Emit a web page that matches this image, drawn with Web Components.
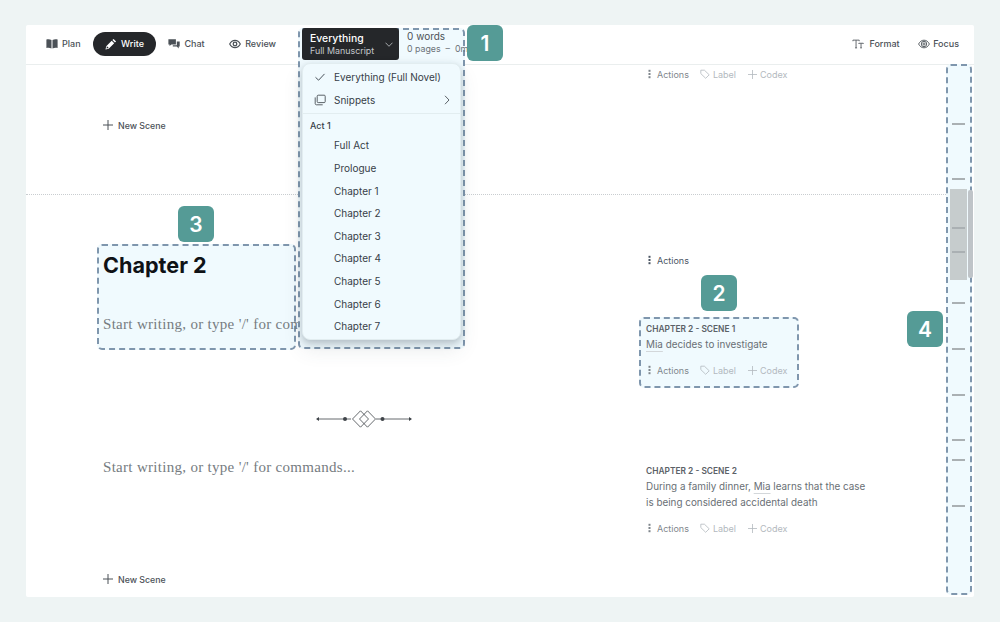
<!DOCTYPE html>
<html lang="en">
<head>
<meta charset="utf-8">
<title>Manuscript</title>
<style>
  html,body{margin:0;height:100%}
  body{background:#eef4f4;font-family:Inter,"Liberation Sans",sans-serif;-webkit-font-smoothing:antialiased}
</style>
</head>
<body>
<app-shell>
  <top-bar slot="top">
    <tab-item><svg viewBox="0 0 12 12" width="12" height="12"><path fill="#4b5157" d="M0.400 1.600c1.700-.4 3.600-.3 5.100.4v8.400c-1.600-.7-3.400-.8-5.100-.4zM11.600 1.600c-1.700-.4-3.600-.3-5.100.4v8.400c1.600-.7 3.400-.8 5.100-.4z"/></svg>Plan</tab-item>
    <tab-item active><svg viewBox="0 0 12 12" width="12" height="12"><path fill="#fff" d="M8.600.9l2.500 2.500-1.200 1.200-2.500-2.500zM6.700 2.800l2.500 2.500-5.500 5.500-3.200.7.700-3.200zM1.900 8.200l-.4 2.300 2.300-.4z"/></svg>Write</tab-item>
    <tab-item><svg viewBox="0 0 12 12" width="12" height="12"><path fill="#4b5157" d="M.4 1.200h7.500v5.200H3.400L1.500 8V6.400H.4z"/><path fill="#4b5157" d="M8.800 3.600h2.900v5h-1v1.900L8.800 8.600H4.800V7.300h4z"/></svg>Chat</tab-item>
    <tab-item><svg viewBox="0 0 12 12" width="12" height="12" fill="none" stroke="#4b5157"><path stroke-width="1.200" d="M.7 6C2 3.600 3.800 2.400 6 2.400S10 3.600 11.300 6C10 8.400 8.200 9.600 6 9.600S2 8.400.7 6z"/><circle cx="6" cy="6" r="1.800" stroke-width="1.300"/></svg>Review</tab-item>
    <scope-picker>
      <scope-button slot="button"></scope-button>
      <word-count slot="count"></word-count>
      <scope-menu slot="menu">
        <menu-row icon="check">Everything (Full Novel)</menu-row>
        <menu-row icon="copy" more>Snippets</menu-row>
        <menu-head>Act 1</menu-head>
        <menu-row>Full Act</menu-row>
        <menu-row>Prologue</menu-row>
        <menu-row>Chapter 1</menu-row>
        <menu-row>Chapter 2</menu-row>
        <menu-row>Chapter 3</menu-row>
        <menu-row>Chapter 4</menu-row>
        <menu-row>Chapter 5</menu-row>
        <menu-row>Chapter 6</menu-row>
        <menu-row>Chapter 7</menu-row>
      </scope-menu>
      <call-out slot="badge" style="left:165px;top:0">1</call-out>
    </scope-picker>
    <tool-item style="margin-left:auto"><svg viewBox="0 0 13 12" width="12" height="12" fill="none" stroke="#4b5157" stroke-width=".9"><path d="M1 3V1.800h6.800V3M4.400 1.800v8.400M3.300 10.200h2.200M7.400 6V5.200h4.800V6M9.800 5.200v5M8.900 10.200h1.800"/></svg>Format</tool-item>
    <tool-item style="gap:3px"><svg viewBox="0 0 12 12" width="12" height="12" fill="none" stroke="#4b5157"><path stroke-width=".9" d="M.6 6C1.900 3.500 3.700 2.200 6 2.200S10.100 3.500 11.400 6C10.100 8.500 8.300 9.800 6 9.800S1.900 8.500.6 6z"/><circle cx="6" cy="6" r="2.700" stroke-width=".9"/><circle cx="6" cy="6" r="1.100" stroke-width=".9"/></svg>Focus</tool-item>
  </top-bar>

  <editor-pane slot="main">
    <scene-section first>
      <new-scene slot="left" style="margin-top:54px">New Scene</new-scene>
      <action-row slot="right" style="margin:3px 0 0 9px"></action-row>
    </scene-section>

    <scene-section>
      <hl-box slot="left" style="margin:49px 0 0 71px;width:199px;height:106px;padding:6px 4px 0">
        <call-out style="left:79px;top:-40px">3</call-out>
        <chapter-title>Chapter 2</chapter-title>
        <scene-placeholder style="margin-top:37px">Start writing, or type '/' for commands...</scene-placeholder>
      </hl-box>
      <div slot="right" style="padding-top:59px">
        <action-row only style="margin-left:9px;color:#4b5563"></action-row>
        <hl-box style="margin-top:51px;width:160px;height:71px;padding:4px 5px 0">
          <call-out style="left:60px;top:-44px">2</call-out>
          <scene-summary title="CHAPTER 2 - SCENE 1"><u>Mia</u> decides to investigate</scene-summary>
          <action-row style="margin:12px 0 0 2px"></action-row>
        </hl-box>
      </div>
    </scene-section>

    <scene-section last>
      <div slot="left">
        <scene-break></scene-break>
        <scene-placeholder style="margin:30px 0 0 77px">Start writing, or type '/' for commands...</scene-placeholder>
        <new-scene style="margin:97px 0 0 77px">New Scene</new-scene>
      </div>
      <div slot="right" style="padding:70px 0 0 7px">
        <scene-summary title="CHAPTER 2 - SCENE 2"><span>During a family dinner, <u>Mia</u> learns that the case is being considered accidental death</span></scene-summary>
        <action-row style="margin:12px 0 0 2px"></action-row>
      </div>
    </scene-section>
  </editor-pane>

  <scroll-rail slot="rail">
    <call-out style="left:-41px;top:245px">4</call-out>
  </scroll-rail>
</app-shell>

<script>
function make(name, css, html, setup){
  customElements.define(name, class extends HTMLElement{
    constructor(){
      super();
      const r=this.attachShadow({mode:'open'});
      r.innerHTML='<style>'+css+'</style>'+html;
    }
    connectedCallback(){ if(setup && !this._d){this._d=1;setup(this);} }
  });
}
make('app-shell',`
  :host{display:block;box-sizing:border-box;width:1000px;height:622px;padding:25px 26px}
  .win{height:572px;background:#fff;display:flex;flex-direction:column;border-radius:2px}
  .body{flex:1;display:flex;min-height:0;position:relative}
`,`<div class="win"><slot name="top"></slot><div class="body"><slot name="main"></slot><slot name="rail"></slot></div></div>`);

make('top-bar',`
  :host{display:flex;align-items:center;box-sizing:border-box;height:40px;padding:0 15px 1px 8px;gap:.5px;border-bottom:1px solid #eaeeee;position:relative;z-index:3;flex:none}
`,`<slot></slot>`);

make('tab-item',`
  :host{display:inline-flex;align-items:center;gap:4px;height:24px;padding:0 12px;border-radius:12px;font:500 9px Inter,sans-serif;color:#4b5157;white-space:nowrap;margin-top:-1px}
  :host([active]){background:#25272a;color:#fff}
`,`<slot></slot>`);

make('tool-item',`
  :host{display:inline-flex;align-items:center;gap:5px;font:500 9px Inter,sans-serif;color:#4b5157;white-space:nowrap;margin-left:18px;margin-top:-1px}
`,`<slot></slot>`);

make('scope-picker',`
  :host{display:block;position:relative;align-self:flex-start;margin:0 0 0 13.500px;width:159px;height:39px}
  .box{position:absolute;left:-4px;top:3px;width:167px;height:321px;box-sizing:border-box;background:#f0fafe;border:2px dashed #7f96ad;border-radius:5px;z-index:-1}
  .row{display:flex;margin-top:3px;height:32px}
  .menu{position:absolute;left:0;top:38px}
`,`<div class="box"></div><div class="row"><slot name="button"></slot><slot name="count"></slot></div><div class="menu"><slot name="menu"></slot></div><slot name="badge"></slot>`);

make('scope-button',`
  :host{display:flex;flex:none;align-items:center;box-sizing:border-box;width:97px;height:32px;background:#25272a;border-radius:3px;padding:0 6px 0 8px;color:#fff;font-family:Inter,sans-serif}
  .t{flex:1;min-width:0}
  .a{font-size:10.400px;font-weight:500;line-height:13px}
  .b{font-size:8.900px;line-height:12px;color:#c4c8cc;white-space:nowrap}
`,`<div class="t"><div class="a">Everything</div><div class="b">Full Manuscript</div></div>
<svg viewBox="0 0 8 5" width="8" height="5" fill="none" stroke="#c4c8cc" stroke-width=".8"><path d="M.5.7L4 4.300 7.500.7"/></svg>`);

make('word-count',`
  :host{display:block;margin-left:8px;font-family:Inter,sans-serif;white-space:nowrap}
  .a{font-size:10px;line-height:13px;color:#4b5157;margin-top:2px}
  .b{font-size:8.800px;line-height:12px;color:#6b7177;margin-top:0}
`,`<div class="a">0 words</div><div class="b">0 pages &nbsp;–&nbsp; 0min</div>`);

make('scope-menu',`
  :host{display:block;box-sizing:border-box;width:159px;height:277px;background:#f0fafe;border-radius:8px;border:1px solid #e2edf0;padding-top:2px;box-shadow:0 3px 7px rgba(60,75,90,.28),0 10px 20px rgba(60,75,90,.1)}
`,`<slot></slot>`);

make('menu-row',`
  :host{display:flex;align-items:center;height:22.600px;padding-left:31px;padding-right:10px;font:400 10px Inter,sans-serif;color:#374048;position:relative}
  svg.i{position:absolute;left:11px;top:5px}
  .t{flex:1}
`,`<span id="i"></span><span class="t"><slot></slot></span><span id="m"></span>`,
el=>{
  const k=el.getAttribute('icon'),s=el.shadowRoot;
  if(k==='check') s.getElementById('i').innerHTML='<svg class="i" viewBox="0 0 12 12" width="12" height="12" fill="none" stroke="#374048" stroke-width=".9"><path d="M1.500 6.300L4.600 9.200 10.500 2.900"/></svg>';
  if(k==='copy') s.getElementById('i').innerHTML='<svg class="i" viewBox="0 0 12 12" width="12" height="12" fill="none" stroke="#4b5157" stroke-width=".9"><rect x="3.200" y="1.200" width="8" height="7.400" rx="1"/><path d="M1.200 3.400v6.200c0 .7.500 1.200 1.200 1.200h6.300"/></svg>';
  if(el.hasAttribute('more')) s.getElementById('m').innerHTML='<svg style="display:block" viewBox="0 0 6 10" width="6" height="10" fill="none" stroke="#4b5157" stroke-width=".9"><path d="M1 .8L5 5 1 9.200"/></svg>';
});

make('menu-head',`
  :host{display:flex;align-items:center;height:20px;margin-top:2px;margin-bottom:-1px;padding:1px 0 0 7px;border-top:1px solid #e2edf0;font:500 9px Inter,sans-serif;color:#374048}
`,`<slot></slot>`);

make('editor-pane',`
  :host{display:block;flex:1;min-width:0;position:relative}
`,`<slot></slot>`);

make('scene-section',`
  :host{display:grid;grid-template-columns:613px 1fr;box-sizing:border-box;height:200px}
  :host([first]){height:130px;border-bottom:1px dotted #c9cdd0}
  :host([last]){height:202px}
  :host([first]) .l{padding-left:77px}
`,`<div class="l"><slot name="left"></slot></div><div class="r"><slot name="right"></slot></div>`);

make('hl-box',`
  :host{display:block;box-sizing:border-box;position:relative;background:#f0fafe;border:2px dashed #7f96ad;border-radius:5px}
`,`<slot></slot>`);

make('call-out',`
  :host{position:absolute;display:flex;align-items:center;justify-content:center;width:36px;height:36px;border-radius:6px;background:#559b96;color:#fff;font:600 21px Inter,sans-serif;z-index:5}
`,`<slot></slot>`);

make('new-scene',`
  :host{display:flex;align-items:center;gap:5px;height:12px;font:500 8.800px Inter,sans-serif;color:#4b5157;white-space:nowrap}
`,`<svg viewBox="0 0 10 10" width="10" height="10" fill="none" stroke="#4b5157" stroke-width="1"><path d="M5 0v10M0 5h10"/></svg><slot></slot>`);

make('action-row',`
  :host{display:flex;align-items:center;height:12px;font:400 9px Inter,sans-serif;color:#7f868c;white-space:nowrap}
  .a{display:flex;align-items:center}
  .dots{margin-right:6px}
  .l{display:flex;align-items:center;gap:3px;color:#b3b9be;margin-left:11px}
  .c{margin-left:12px}
  :host([only]) .l{display:none}
`,`<span class="a"><svg class="dots" viewBox="0 0 3 10" width="3" height="10" fill="currentColor"><rect x=".5" y=".8" width="2" height="2"/><rect x=".5" y="4" width="2" height="2"/><rect x=".5" y="7.200" width="2" height="2"/></svg>Actions</span>
<span class="l"><svg viewBox="0 0 10 10" width="10" height="10" fill="none" stroke="#b3b9be" stroke-width=".8"><path d="M.8 1.200h3.600l4.800 4.600-3.500 3.500L.8 4.600z"/></svg>Label</span>
<span class="l c"><svg viewBox="0 0 9 9" width="9" height="9" fill="none" stroke="#b3b9be" stroke-width=".8"><path d="M4.500 0v9M0 4.500h9"/></svg>Codex</span>`);

make('chapter-title',`
  :host{display:block;font:700 21.600px/26px Inter,sans-serif;color:#0f1216;white-space:nowrap}
`,`<slot></slot>`);

make('scene-placeholder',`
  :host{display:block;font:400 15px/18px "Liberation Serif",serif;letter-spacing:.3px;color:#767c81;white-space:nowrap}
`,`<slot></slot>`);

make('scene-summary',`
  :host{display:block;font-family:Inter,sans-serif;width:228px}
  .h{font-size:8.400px;font-weight:600;line-height:12px;color:#5b6167;white-space:nowrap}
  .d{font-size:9.900px;line-height:16px;color:#696f75;margin-top:1px}
`,`<div class="h" id="h"></div><div class="d"><slot></slot></div>`,
el=>{el.shadowRoot.getElementById('h').textContent=el.getAttribute('title');el.removeAttribute('title');});

make('scene-break',`
  :host{display:block;margin:15px 0 0 289px;width:98px;height:18px}
  svg{display:block}
`,`<svg viewBox="0 0 98 18" width="98" height="18" fill="none" stroke="#3f4449" stroke-width=".8">
<path d="M2 9h34M61 9h35"/><path fill="#3f4449" stroke="none" d="M1 9l3-2v4zM97 9l-3-2v4z"/>
<circle cx="30" cy="9" r="2" fill="#3f4449" stroke="none"/><circle cx="67.500" cy="9" r="2" fill="#3f4449" stroke="none"/>
<path d="M45.500 .8l8 8.200-8 8.200-8-8.200zM52.500 .8l8 8.200-8 8.200-8-8.200z"/></svg>`);

make('scroll-rail',`
  :host{display:block;box-sizing:border-box;position:relative;flex:none;width:26px;height:531px;margin:-1px 2px 2px 0;background:#f0fafe;border:2px dashed #7f96ad;border-radius:5px;z-index:4}
  .thumb{position:absolute;left:2px;top:123px;width:17px;height:91px;background:#c6cccd}
  .bar{position:absolute;left:20px;top:124px;width:5px;height:88px;background:#bfc4c8;border-radius:2px}
  .marks{display:flex;flex-direction:column;align-items:center;position:relative;padding-top:57px}
  .marks i{display:block;width:13px;height:2px;background:#aab0b3;flex:none;margin-left:-1px}
`,`<div class="thumb"></div><div class="bar"></div><div class="marks" id="m"></div><slot></slot>`,
el=>{
  const m=el.shadowRoot.getElementById('m');
  [0,53,47,22,49,44,44,43,18,44].forEach(g=>{const i=document.createElement('i');i.style.marginTop=g+'px';m.appendChild(i);});
});
</script>
<style>
  scene-summary u{text-decoration:underline solid #d3d7da;text-underline-offset:3px;text-decoration-thickness:1px}
</style>
</body>
</html>
